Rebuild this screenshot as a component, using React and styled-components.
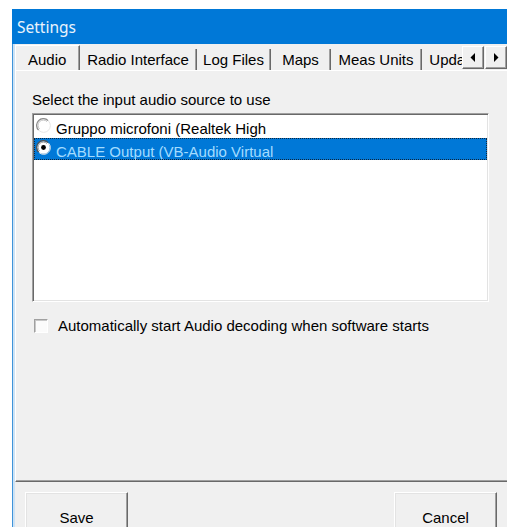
import React from "react";
import styled, { createGlobalStyle } from "styled-components";

const GlobalStyle = createGlobalStyle`
  html, body {
    margin: 0;
    padding: 0;
    background: #fff;
  }
  body {
    font-family: "Liberation Sans", Arial, sans-serif;
    font-size: 15px;
    color: #000;
  }
`;

const Page = styled.div`
  width: 507px;
  height: 527px;
  box-sizing: border-box;
  padding: 9px 0 0 12px;
  overflow: hidden;
`;

const Window = styled.div`
  height: 560px;
  display: flex;
  flex-direction: column;
  background: #f0f0f0;
  border-left: 1px solid #3f93d9;
  box-shadow: inset 2px 0 0 #cde2f4;
`;

const TitleBar = styled.div`
  height: 35px;
  flex: none;
  display: flex;
  align-items: center;
  padding-left: 5px;
  margin-left: -1px;
  background: #0078d7;
  color: #e9f3fc;
  font-family: "Noto Sans", "Open Sans", sans-serif;
  font-size: 15.5px;
`;

const Body = styled.div`
  flex: 1;
  display: flex;
  flex-direction: column;
  padding-left: 2px;
`;

const TabRow = styled.div`
  height: 26px;
  flex: none;
  display: flex;
  align-items: flex-end;
`;

const TabList = styled.div`
  flex: 1;
  height: 100%;
  display: flex;
  align-items: flex-end;
  overflow: hidden;
  white-space: nowrap;
`;

const Tab = styled.div`
  flex: none;
  box-sizing: border-box;
  width: ${(p) => p.$width}px;
  height: 21px;
  display: flex;
  align-items: flex-end;
  justify-content: ${(p) => (p.$active ? "flex-start" : "center")};
  padding: ${(p) => (p.$active ? "0 0 2px 12px" : "0 0 2px 0")};
  line-height: 17px;
  background: #f0f0f0;
  border-right: 1px solid #696969;
  box-shadow: inset -1px 0 0 #a0a0a0;
  ${(p) =>
    p.$active &&
    `
    border-top: 1px solid #fff;
    border-left: 1px solid #fff;
    position: relative;
    z-index: 1;
    margin-bottom: -1px;
    height: 26px;
    padding-bottom: 3px;
  `}
`;

const ScrollButtons = styled.div`
  flex: none;
  display: flex;
  gap: 1px;
  height: 23px;
  align-self: flex-end;
  margin-bottom: 1px;
`;

const ScrollButton = styled.div`
  width: 22px;
  height: 23px;
  box-sizing: border-box;
  display: flex;
  align-items: center;
  justify-content: center;
  background: #f0f0f0;
  border-style: solid;
  border-width: 1px;
  border-color: #fff #696969 #696969 #fff;
  box-shadow: inset -1px -1px 0 #a0a0a0;
`;

const Panel = styled.div`
  height: 412px;
  flex: none;
  box-sizing: border-box;
  padding: 20px 0 0 16px;
  border-top: 1px solid #fff;
  border-left: 1px solid #fff;
  border-bottom: 1px solid #696969;
  box-shadow: inset 0 -1px 0 #a0a0a0;
  display: flex;
  flex-direction: column;
`;

const Label = styled.div`
  line-height: 17px;
`;

const ListBox = styled.div`
  width: 457px;
  height: 189px;
  box-sizing: border-box;
  margin-top: 5px;
  background: #fff;
  border-style: solid;
  border-width: 1px;
  border-color: #a0a0a0 #fff #fff #a0a0a0;
  box-shadow: inset 1px 1px 0 #696969, inset -1px -1px 0 #e3e3e3;
  padding: 1px 1px 0 1px;
  overflow: hidden;
`;

const ListRow = styled.div`
  height: 22px;
  box-sizing: border-box;
  display: flex;
  align-items: flex-end;
  gap: 5px;
  padding-left: 2px;
  line-height: 17px;
  white-space: nowrap;
  background: ${(p) => (p.$selected ? "#0078d7" : "transparent")};
  color: ${(p) => (p.$selected ? "#a3dcff" : "#000")};
  outline: ${(p) => (p.$selected ? "1px dotted #10253a" : "none")};
  outline-offset: -1px;
  margin-top: ${(p) => (p.$selected ? 1 : 0)}px;

  svg {
    align-self: flex-start;
    margin-top: ${(p) => (p.$selected ? 2 : 3)}px;
    flex: none;
  }
`;

const CheckRow = styled.label`
  display: flex;
  align-items: center;
  gap: 10px;
  margin-top: 15px;
  margin-left: 2px;
  line-height: 17px;
`;

const CheckBox = styled.span`
  width: 14px;
  height: 14px;
  box-sizing: border-box;
  background: #fbfbfb;
  border-style: solid;
  border-width: 1px;
  border-color: #a0a0a0 #fff #fff #a0a0a0;
  box-shadow: inset 1px 1px 0 #c8c8c8;
`;

const Footer = styled.div`
  display: flex;
  justify-content: space-between;
  padding: 10px 10px 0 10px;
`;

const Button = styled.button`
  width: 103px;
  height: 50px;
  box-sizing: border-box;
  padding: 0;
  font-family: "Liberation Sans", Arial, sans-serif;
  font-size: 15px;
  color: #000;
  background: #f0f0f0;
  border-style: solid;
  border-width: 1px;
  border-color: #fff #696969 #696969 #fff;
  box-shadow: inset -1px -1px 0 #a0a0a0, inset 1px 1px 0 #e3e3e3;
`;

const RadioIcon = ({ checked }) => (
  <svg width="15" height="15" viewBox="0 0 15 15">
    <circle cx="7.5" cy="7.5" r="6.3" fill="#fff" />
    <path d="M2.6 12.1 A6.3 6.3 0 0 1 12.1 2.6" fill="none" stroke={checked ? "#555" : "#8c8c8c"} strokeWidth="1.3" />
    <path d="M3.6 11 A5 5 0 0 1 11 3.6" fill="none" stroke={checked ? "#999" : "#c4c4c4"} strokeWidth="1" />
    <path d="M12.4 2.9 A6.3 6.3 0 0 1 2.9 12.4" fill="none" stroke="#e6e6e6" strokeWidth="1" />
    {checked && <circle cx="7.5" cy="7.5" r="2.4" fill="#000" />}
  </svg>
);

const Arrow = ({ dir }) => (
  <svg width="6" height="9" viewBox="0 0 6 9">
    {dir === "left" ? <polygon points="5,0 5,9 0.5,4.5" fill="#000" /> : <polygon points="1,0 1,9 5.5,4.5" fill="#000" />}
  </svg>
);

const tabs = [
  { name: "Audio", width: 65, active: true },
  { name: "Radio Interface", width: 117 },
  { name: "Log Files", width: 74 },
  { name: "Maps", width: 60 },
  { name: "Meas Units", width: 91 },
  { name: "Update", width: 64 },
];

const sources = ["Gruppo microfoni (Realtek High", "CABLE Output (VB-Audio Virtual"];

export default function App() {
  const selected = 1;
  return (
    <>
      <GlobalStyle />
      <Page>
        <Window>
          <TitleBar>Settings</TitleBar>
          <Body>
            <TabRow>
              <TabList>
                {tabs.map((t) => (
                  <Tab key={t.name} $width={t.width} $active={t.active}>
                    {t.name}
                  </Tab>
                ))}
              </TabList>
              <ScrollButtons>
                <ScrollButton>
                  <Arrow dir="left" />
                </ScrollButton>
                <ScrollButton>
                  <Arrow dir="right" />
                </ScrollButton>
              </ScrollButtons>
            </TabRow>
            <Panel>
              <Label>Select the input audio source to use</Label>
              <ListBox>
                {sources.map((s, i) => (
                  <ListRow key={s} $selected={i === selected}>
                    <RadioIcon checked={i === selected} />
                    <span>{s}</span>
                  </ListRow>
                ))}
              </ListBox>
              <CheckRow>
                <CheckBox />
                <span>Automatically start Audio decoding when software starts</span>
              </CheckRow>
            </Panel>
            <Footer>
              <Button>Save</Button>
              <Button>Cancel</Button>
            </Footer>
          </Body>
        </Window>
      </Page>
    </>
  );
}
